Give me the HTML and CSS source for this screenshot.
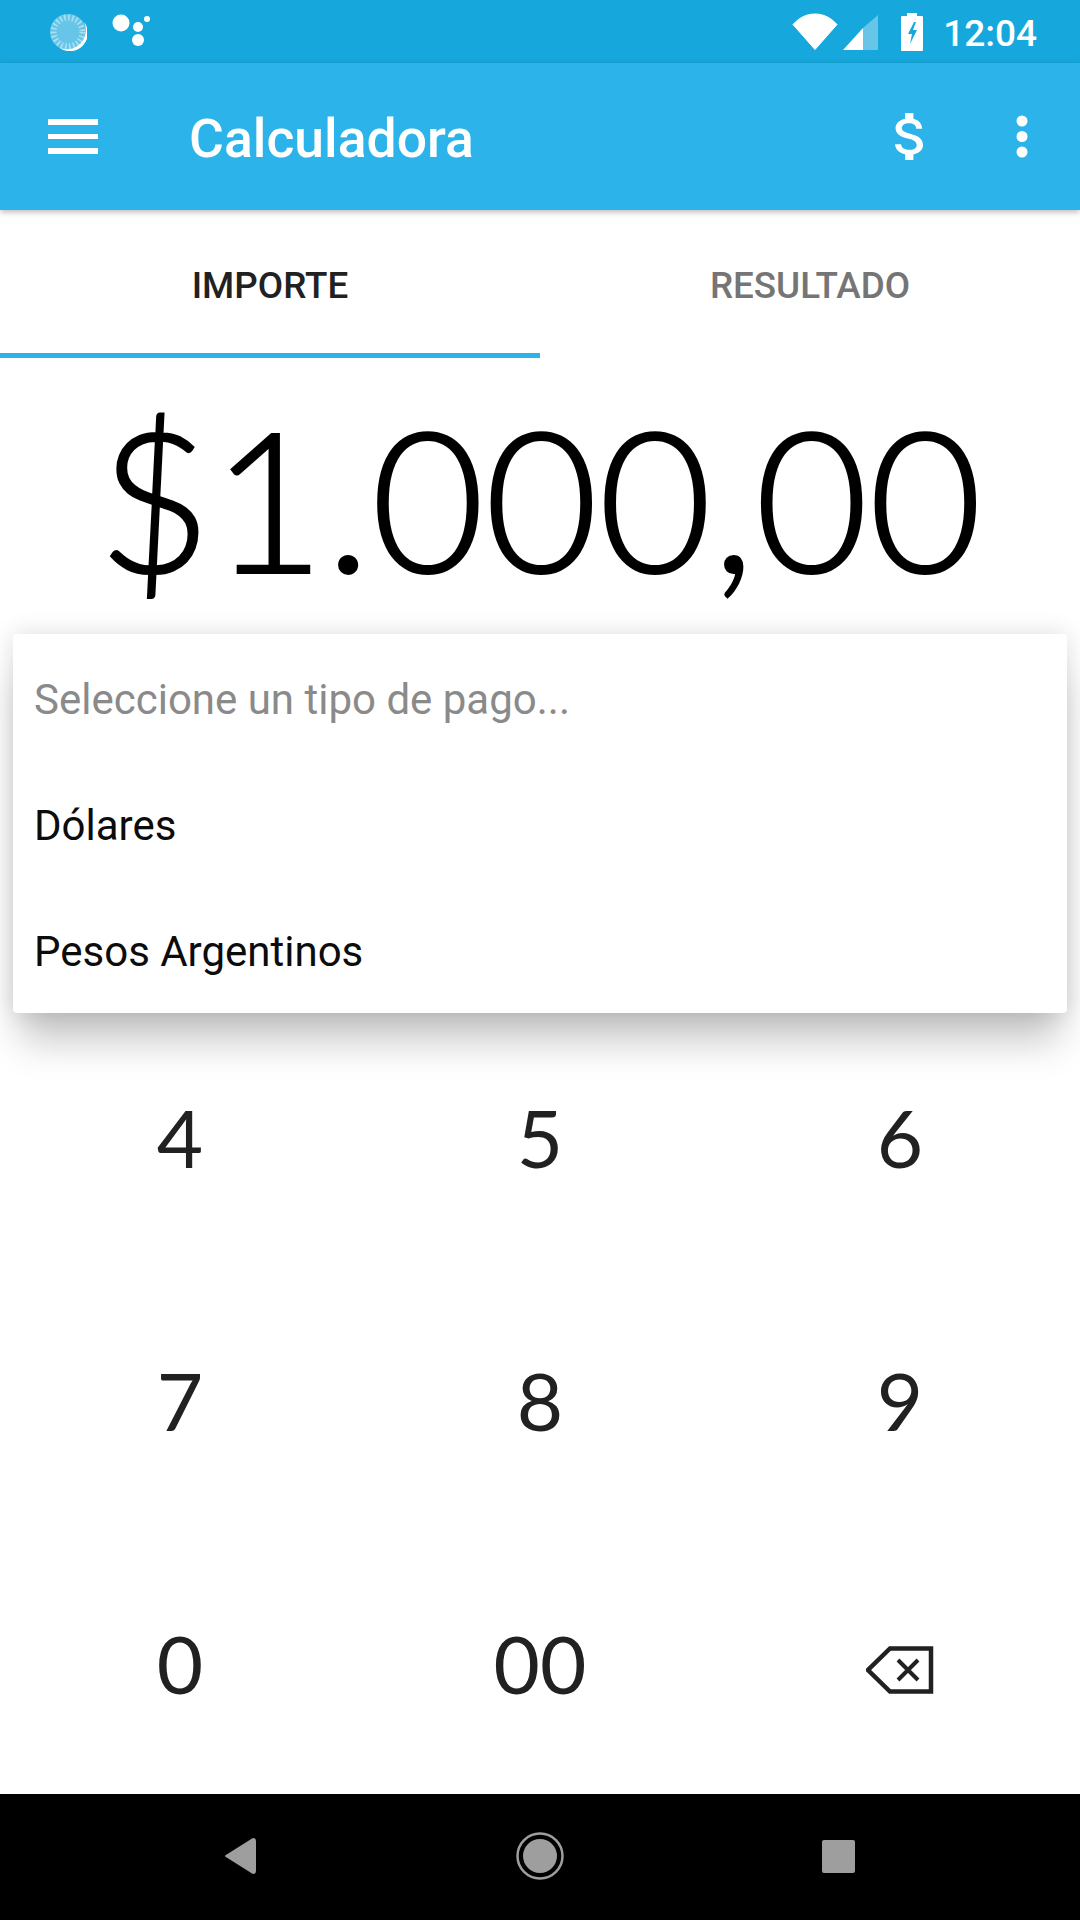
FILE: index.html
```html
<!DOCTYPE html>
<html lang="es">
<head>
<meta charset="utf-8">
<title>Calculadora</title>
<link rel="stylesheet" href="styles.css">
</head>
<body>
<div class="screen">
  <header class="statusbar">
    <div class="status-left">
      <svg class="ic-sync" width="38" height="38" viewBox="0 0 38 38">
        <circle cx="19" cy="19" r="18" fill="#fff" fill-opacity=".35"/>
        <circle cx="19" cy="19" r="14.5" fill="none" stroke="#fff" stroke-opacity=".45" stroke-width="6" stroke-dasharray="1.6 2.4"/>
        <path d="M35 9a18 18 0 0 1-25 25.500a19 19 0 0 0 25-25.500z" fill="#fff"/>
      </svg>
      <svg class="ic-dots" width="38" height="32" viewBox="0 0 38 32">
        <circle cx="9" cy="9" r="8.500" fill="#fff"/>
        <circle cx="26" cy="13" r="5" fill="#fff"/>
        <circle cx="26" cy="26" r="6" fill="#fff"/>
        <circle cx="35" cy="5" r="3" fill="#fff"/>
      </svg>
    </div>
    <div class="status-right">
      <svg class="ic-wifi" width="46" height="37" viewBox="0 0 46 37">
        <path d="M23 36.500 1 11.500C7 5 14 1 23 1s16 4 22 10.500z" fill="#fff" stroke="#fff" stroke-linejoin="round"/>
      </svg>
      <svg class="ic-cell" width="36" height="36" viewBox="0 0 36 36">
        <path d="M36 1v34a1 1 0 0 1-1 1H21V14z" fill="#fff" fill-opacity=".35"/>
        <path d="M21 14v22H1z" fill="#fff"/>
      </svg>
      <svg class="ic-batt" width="22" height="38" viewBox="0 0 22 38">
        <path d="M6 0h10v3h5a1 1 0 0 1 1 1v33a1 1 0 0 1-1 1H1a1 1 0 0 1-1-1V4a1 1 0 0 1 1-1h5z" fill="#fff"/>
        <path d="M13 9 7 21h4l-2 10 7-14h-4l3-8z" fill="#16a8dc"/>
      </svg>
      <span class="clock">12:04</span>
    </div>
  </header>

  <nav class="appbar">
    <svg class="ic-menu" width="50" height="36" viewBox="0 0 50 36">
      <path d="M0 0h50v6H0zM0 15h50v5H0zM0 29h50v6H0z" fill="#fff"/>
    </svg>
    <h1 class="title">Calculadora</h1>
    <svg class="ic-dollar" width="28" height="47" viewBox="6.300 3 10.200 18" preserveAspectRatio="none">
      <path d="M11.800 10.900c-2.270-.59-3-1.200-3-2.150 0-1.090 1.010-1.850 2.700-1.850 1.780 0 2.440.85 2.500 2.100h2.210c-.07-1.720-1.120-3.300-3.210-3.810V3h-3v2.160c-1.940.42-3.500 1.680-3.500 3.610 0 2.310 1.910 3.460 4.700 4.130 2.500.6 3 1.480 3 2.410 0 .69-.49 1.790-2.700 1.790-2.060 0-2.870-.92-3-2.100H6.320c.12 2.190 1.760 3.420 3.680 3.830V21h3v-2.150c1.950-.37 3.500-1.500 3.500-3.550 0-2.840-2.430-3.810-4.700-4.400z" fill="#fff"/>
    </svg>
    <svg class="ic-more" width="12" height="43" viewBox="0 0 12 43">
      <circle cx="6" cy="6" r="5.500" fill="#fff"/>
      <circle cx="6" cy="21.500" r="5.500" fill="#fff"/>
      <circle cx="6" cy="37" r="5.500" fill="#fff"/>
    </svg>
  </nav>

  <div class="tabs">
    <div class="tab tab-active">IMPORTE</div>
    <div class="tab">RESULTADO</div>
  </div>

  <div class="amount">$1.000,00</div>

  <div class="keypad">
    <div class="key"></div><div class="key"></div><div class="key"></div>
    <div class="key">4</div><div class="key">5</div><div class="key">6</div>
    <div class="key">7</div><div class="key">8</div><div class="key">9</div>
    <div class="key">0</div><div class="key">00</div>
    <div class="key">
      <svg class="ic-back" width="68" height="48" viewBox="0 0 68 48">
        <path d="M65 2.500H24L2 24l22 21.500h41z" fill="none" stroke="#212121" stroke-width="4.500"/>
        <path d="M32 14l20 20M52 14 32 34" fill="none" stroke="#212121" stroke-width="4"/>
      </svg>
    </div>
  </div>

  <ul class="menu">
    <li class="menu-item menu-hint">Seleccione un tipo de pago...</li>
    <li class="menu-item">Dólares</li>
    <li class="menu-item">Pesos Argentinos</li>
  </ul>

  <footer class="navbar">
    <svg width="34" height="38" viewBox="0 0 34 38">
      <path d="M28 2 1 19l27 17a2 2 0 0 0 2-2V4a2 2 0 0 0-2-2z" fill="#9e9e9e" stroke="#9e9e9e" stroke-width="2" stroke-linejoin="round"/>
    </svg>
    <svg width="48" height="48" viewBox="0 0 48 48">
      <circle cx="24" cy="24" r="22.500" fill="none" stroke="#9e9e9e" stroke-width="2.500"/>
      <circle cx="24" cy="24" r="17" fill="#9e9e9e"/>
    </svg>
    <svg width="33" height="33" viewBox="0 0 33 33">
      <rect width="33" height="33" rx="2" fill="#9e9e9e"/>
    </svg>
  </footer>
</div>
</body>
</html>
```
FILE: styles.css
```css
* { box-sizing: border-box; }
html, body { margin: 0; padding: 0; }
body { background: #fff; font-family: Roboto, "Liberation Sans", sans-serif; }

.screen {
  position: relative;
  width: 1080px;
  height: 1920px;
  display: flex;
  flex-direction: column;
  overflow: hidden;
  background: #fff;
}

.statusbar {
  height: 63px;
  flex: none;
  background: #16a8dc;
  display: flex;
  justify-content: space-between;
  align-items: center;
  padding: 0 43px 0 49px;
}
.status-left { display: flex; align-items: center; gap: 25px; }
.ic-dots { margin-top: -4px; }
.status-right { display: flex; align-items: center; }
.ic-wifi { margin-right: 4px; }
.ic-cell { margin-right: 23px; }
.ic-batt { margin-right: 20px; }
.clock {
  color: #fff;
  font-size: 37px;
  font-weight: 500;
  line-height: 63px;
  padding-top: 3px;
}

.appbar {
  height: 147px;
  flex: none;
  position: relative;
  z-index: 2;
  background: #2bb3ea;
  box-shadow: 0 2px 6px rgba(0, 0, 0, .28);
  display: flex;
  align-items: center;
  padding: 0 52px 0 48px;
}
.ic-menu { margin-right: 91px; }
.title {
  flex: 1;
  margin: 0;
  padding-top: 4px;
  color: #fff;
  font-size: 53.500px;
  font-weight: 500;
}
.ic-dollar { margin-right: 93px; }

.tabs {
  height: 148px;
  flex: none;
  display: flex;
}
.tab {
  flex: 1;
  display: flex;
  align-items: center;
  justify-content: center;
  font-size: 36.800px;
  font-weight: 500;
  color: #757575;
  padding-top: 8px;
  border-bottom: 5px solid transparent;
}
.tab-active {
  color: #212121;
  border-bottom-color: #2bb3ea;
}

.amount {
  height: 384px;
  flex: none;
  display: flex;
  justify-content: center;
  align-items: flex-start;
  padding-top: 20px;
  font-family: Lato, sans-serif;
  font-weight: 300;
  font-size: 196px;
  line-height: 240px;
  color: #000;
  -webkit-text-stroke: 2px #000;
}

.keypad {
  flex: 1;
  display: grid;
  grid-template-columns: repeat(3, 1fr);
  grid-template-rows: repeat(4, 1fr);
}
.key {
  display: flex;
  align-items: center;
  justify-content: center;
  font-family: Lato, sans-serif;
  font-size: 80px;
  color: #212121;
}
.ic-back { margin-top: 14px; }

.menu {
  position: absolute;
  left: 13px;
  top: 634px;
  width: 1054px;
  height: 379px;
  margin: 0;
  padding: 0;
  list-style: none;
  background: #fff;
  border-radius: 4px;
  box-shadow: 0 36px 36px -8px rgba(0, 0, 0, .22), 0 0 24px rgba(0, 0, 0, .14);
}
.menu-item {
  height: 126px;
  display: flex;
  align-items: center;
  padding: 4px 0 0 21px;
  font-size: 42px;
  color: #0c0c0c;
}
.menu-hint { color: #8a8a8a; }

.navbar {
  height: 126px;
  flex: none;
  background: #000;
  display: grid;
  grid-template-columns: repeat(3, 298px);
  justify-content: center;
  align-items: center;
  justify-items: center;
  padding-bottom: 2px;
}
```
